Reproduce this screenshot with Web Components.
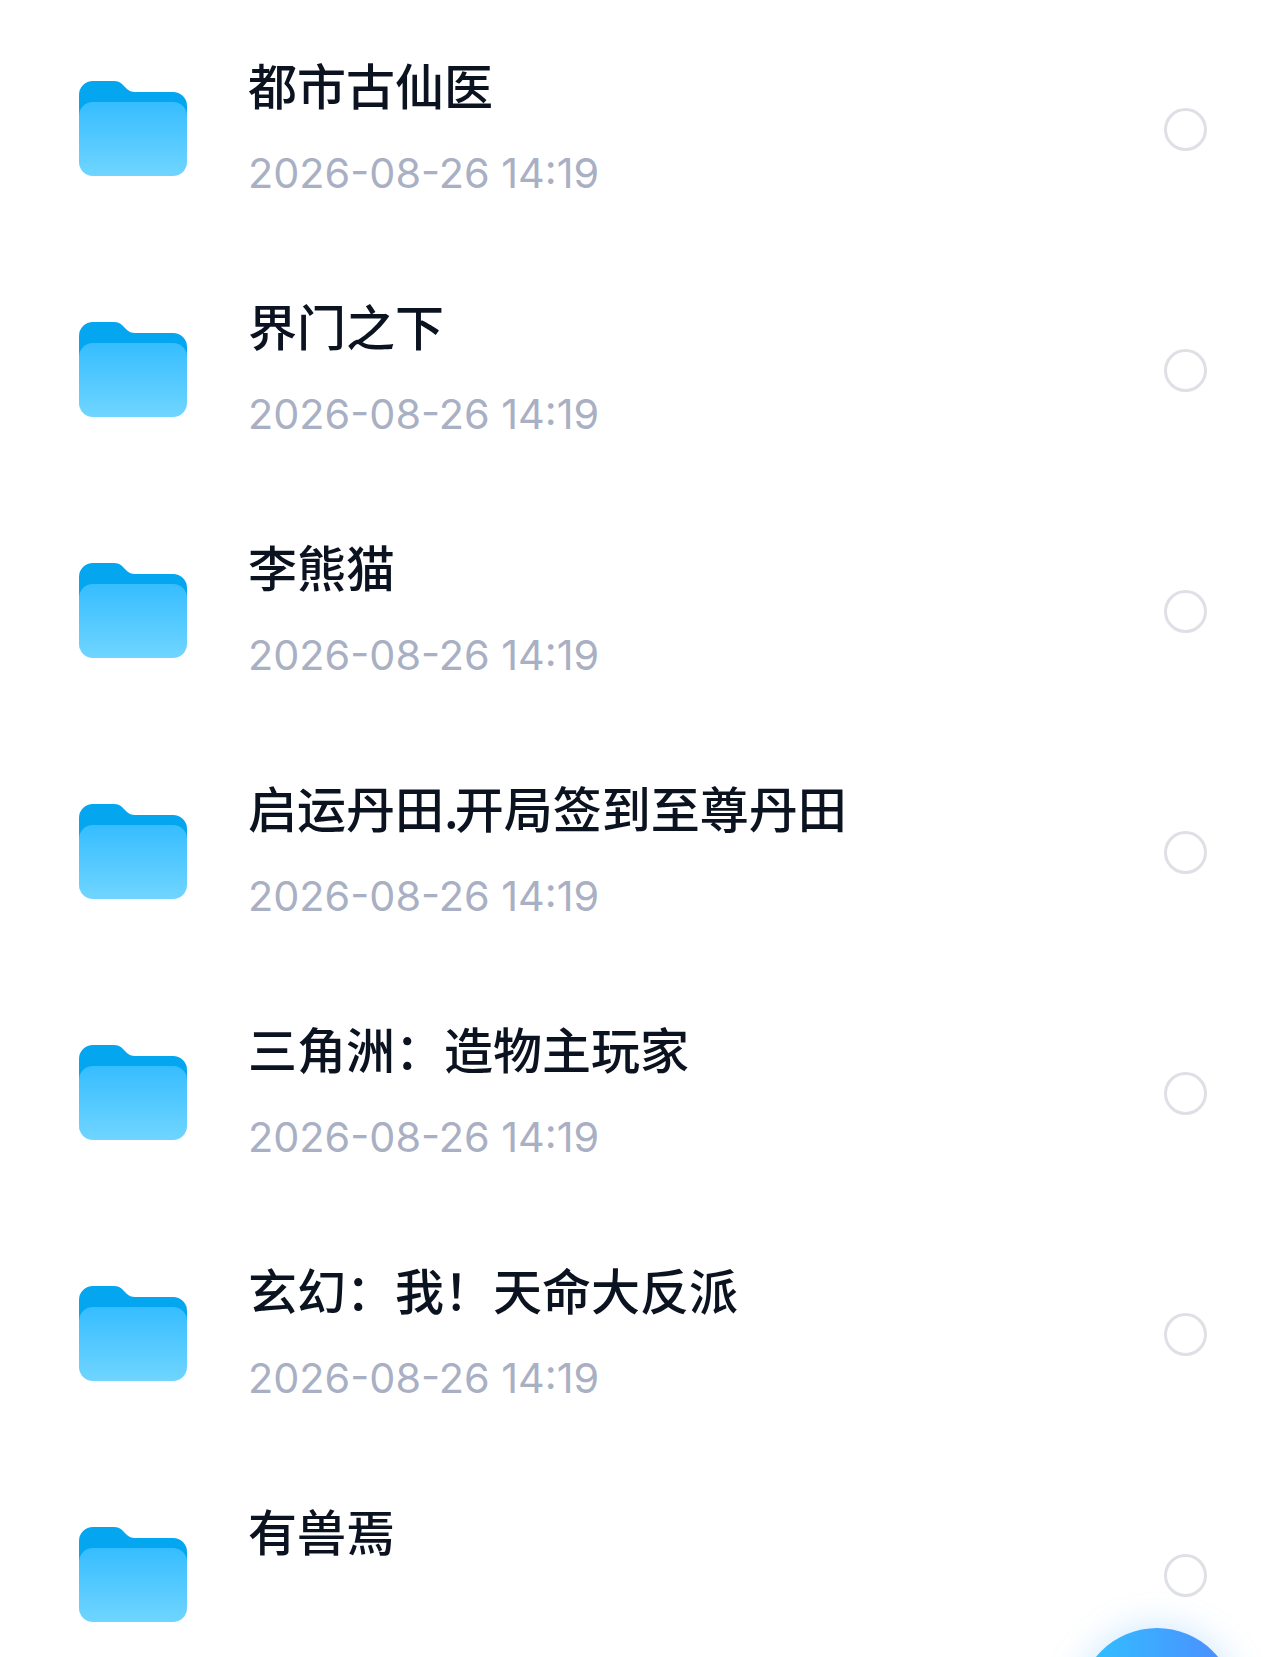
<!DOCTYPE html>
<html lang="zh-CN">
<head>
<meta charset="utf-8">
<title>文件夹</title>
<style>
html,body{margin:0;padding:0;background:#fff;}
body{width:1280px;height:1657px;overflow:hidden;position:relative;font-family:"Noto Sans CJK SC","Noto Sans",sans-serif;}
.dot{letter-spacing:-4px;}
</style>
</head>
<body>
<template id="folder-tpl">
<style>
:host{display:block;width:108px;height:95px;flex:none;margin-bottom:2px;}
svg{display:block;}
</style>
<svg width="108" height="95" viewBox="0 0 108 95">
<defs><linearGradient id="g" x1="0" y1="0" x2="0" y2="1"><stop offset="0" stop-color="#36bdff"/><stop offset="1" stop-color="#70d5ff"/></linearGradient></defs>
<path d="M0 14 A14 14 0 0 1 14 0 H35 Q40 0 43 3 L48 8 Q51 11 56 11 H94 A14 14 0 0 1 108 25 V50 H0 Z" fill="#04a6f0"/>
<rect x="0" y="21" width="108" height="74" rx="14" ry="14" fill="url(#g)"/>
</svg>
</template>
<template id="radio-tpl">
<style>
:host{display:block;width:43px;height:43px;flex:none;box-sizing:border-box;border:3px solid #dfe0e6;border-radius:50%;}
</style>
</template>
<template id="row-tpl">
<style>
:host{display:flex;align-items:center;height:241px;padding:0 73px 0 79px;box-sizing:border-box;}
.text{flex:1;min-width:0;margin-left:61px;align-self:flex-start;padding-top:43px;}
.title{font:500 49px/64px "Noto Sans CJK SC",sans-serif;color:#0b1220;white-space:nowrap;}
.date{font:400 41.4px/56px Inter,"Noto Sans CJK SC",sans-serif;color:#a9b0c3;margin-top:29px;white-space:nowrap;}
</style>
<file-folder></file-folder>
<div class="text"><div class="title"><slot></slot></div><div class="date"><slot name="date"></slot></div></div>
<file-radio></file-radio>
</template>
<template id="list-tpl">
<style>:host{display:block;padding-top:8.5px;}</style>
<slot></slot>
</template>
<template id="fab-tpl">
<style>
:host{display:block;position:absolute;left:1078px;top:1628px;width:158px;height:158px;border-radius:50%;background:linear-gradient(90deg,#2fc3ff,#4f8aff);box-shadow:0 0 36px rgba(60,160,255,.28);}
</style>
</template>

<file-list>
<file-row>都市古仙医<span slot="date">2026-08-26 14:19</span></file-row>
<file-row>界门之下<span slot="date">2026-08-26 14:19</span></file-row>
<file-row>李熊猫<span slot="date">2026-08-26 14:19</span></file-row>
<file-row>启运丹田<span class="dot">.</span>开局签到至尊丹田<span slot="date">2026-08-26 14:19</span></file-row>
<file-row>三角洲：造物主玩家<span slot="date">2026-08-26 14:19</span></file-row>
<file-row>玄幻：我！天命大反派<span slot="date">2026-08-26 14:19</span></file-row>
<file-row>有兽焉</file-row>
</file-list>
<file-fab></file-fab>

<script>
function def(name,tpl){
  customElements.define(name,class extends HTMLElement{
    constructor(){super();this.attachShadow({mode:"open"}).appendChild(document.getElementById(tpl).content.cloneNode(true));}
  });
}
def("file-folder","folder-tpl");
def("file-radio","radio-tpl");
def("file-row","row-tpl");
def("file-list","list-tpl");
def("file-fab","fab-tpl");
</script>
</body>
</html>
